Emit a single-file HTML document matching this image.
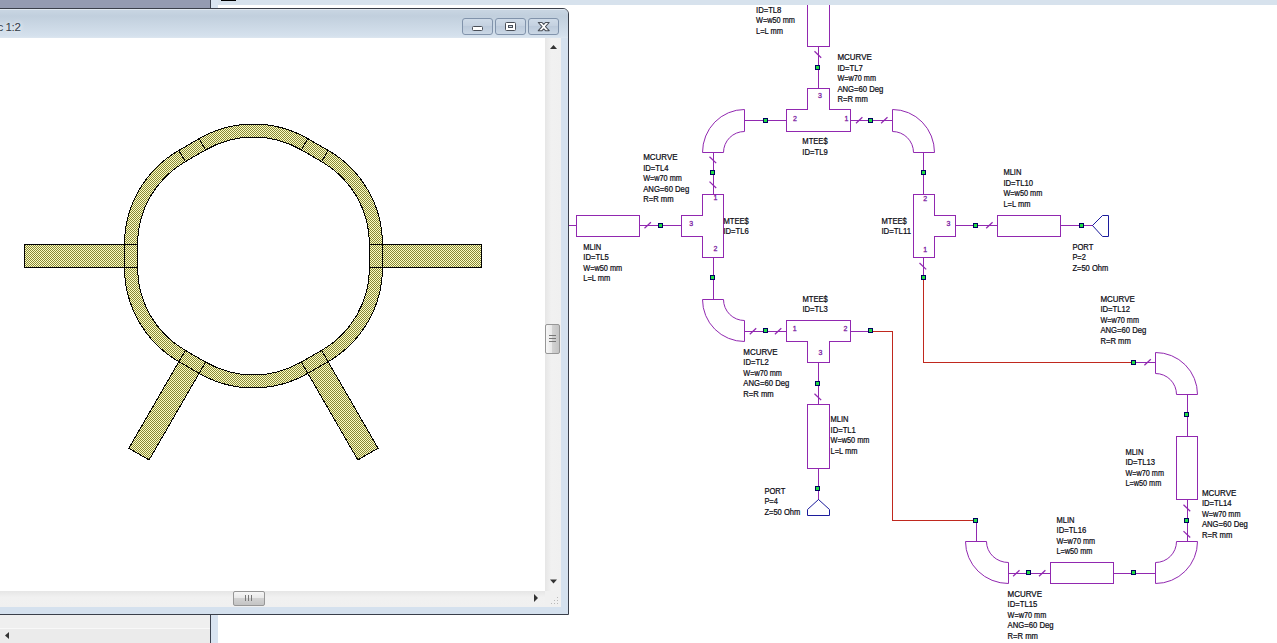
<!DOCTYPE html>
<html><head><meta charset="utf-8"><title>Schematic</title>
<style>
html,body{margin:0;padding:0;}
body{width:1277px;height:643px;overflow:hidden;position:relative;background:#fff;font-family:"Liberation Sans",sans-serif;}
div{position:absolute;box-sizing:border-box;}
#topstrip{left:211px;top:0;width:1066px;height:5px;background:#d7e2ed;}
#leftstrip{left:211px;top:0;width:7px;height:643px;background:#d9e4f1;}
#vline{left:210px;top:0;width:1px;height:643px;background:#3c4250;}
#mark{left:221px;top:0;width:15px;height:1px;background:#000;}
#topleft{left:0;top:0;width:210px;height:9px;background:#949bb1;}
#botleft{left:0;top:614px;width:210px;height:29px;background:#efefef;}
#botleft2{left:0;top:628px;width:210px;height:15px;background:#ebebeb;border-top:1px solid #f8f8f8;}
#win{left:-10px;top:8px;width:579px;height:607px;background:#d5e1ee;border:1px solid #3a3f4a;border-radius:6px 6px 0 0;}
#title{left:0;top:0;width:577px;height:29px;background:linear-gradient(#eef3f8 0px,#c8d5e2 1.5px,#c1cfdd 7px,#d5e1ed 27px,#dde6f0 29px);border-radius:5px 5px 0 0;}
#ttext{left:6.5px;top:11px;font-size:11.6px;line-height:14px;color:#333b46;white-space:nowrap;letter-spacing:-0.45px;text-shadow:0 0 4px rgba(255,255,255,.9),0 0 7px rgba(255,255,255,.6);}
#content{left:9px;top:29px;width:545px;height:553px;background:#fff;}
#vsb{left:554px;top:29px;width:16px;height:553px;background:linear-gradient(90deg,#e6e6e6,#f1f1f1 40%,#f0f0f0);}
#hsb{left:9px;top:582px;width:545px;height:16px;background:linear-gradient(#e6e6e6,#f1f1f1 40%,#f0f0f0);}
#corner{left:554px;top:582px;width:16px;height:16px;background:#f0f0f0;}
.btn{top:9px;width:31px;height:17px;border:1px solid #8193ab;border-radius:3px;background:linear-gradient(#cfdbe8,#c3d0df 50%,#bccadb 50%,#cad7e5);}
#vthumb{left:0px;top:285.5px;width:15px;height:30.5px;border:1px solid #979797;border-radius:2px;background:linear-gradient(90deg,#f6f6f6,#e9e9e9 45%,#d2d2d2 50%,#c4c4c4);}
#hthumb{left:233px;top:0px;width:31.5px;height:14.5px;border:1px solid #979797;border-radius:2px;background:linear-gradient(#f6f6f6,#e9e9e9 45%,#d2d2d2 50%,#c4c4c4);}
svg{position:absolute;left:0;top:0;}
.lb{font-size:8.3px;fill:#0a0a12;stroke:#0a0a12;stroke-width:0.22px;font-family:"Liberation Sans",sans-serif;}
.pn{font-size:7px;fill:#7d1fa3;stroke:#7d1fa3;stroke-width:0.3px;font-family:"Liberation Sans",sans-serif;text-anchor:middle;}
</style></head><body>
<div id="topstrip"></div><div id="leftstrip"></div><div id="vline"></div>
<div id="topleft"></div><div id="botleft"></div><div id="botleft2"></div>
<svg id="schem" width="1277" height="643" viewBox="0 0 1277 643">
<g stroke-width="1">
<path d="M807.5 0 L807.5 46.5 L829.5 46.5 L829.5 0" fill="none" stroke="#9128b0" shape-rendering="crispEdges"/>
<line x1="818.5" y1="46.5" x2="818.5" y2="88.5" stroke="#9128b0" shape-rendering="crispEdges"/>
<line x1="814.5" y1="51.3" x2="821.2" y2="57.7" stroke="#9128b0" stroke-width="1.25"/>
<path d="M807.5 88.5 L829.5 88.5 L829.5 109.5 L850.5 109.5 L850.5 131.5 L786.5 131.5 L786.5 109.5 L807.5 109.5 Z" fill="none" stroke="#9128b0" shape-rendering="crispEdges"/>
<line x1="744.5" y1="120.5" x2="786.5" y2="120.5" stroke="#9128b0" shape-rendering="crispEdges"/>
<line x1="850.5" y1="120.5" x2="892.5" y2="120.5" stroke="#9128b0" shape-rendering="crispEdges"/>
<line x1="856.0" y1="123.2" x2="862.4000000000001" y2="117.3" stroke="#9128b0" stroke-width="1.25"/>
<line x1="881.0999999999999" y1="123.2" x2="887.5" y2="117.3" stroke="#9128b0" stroke-width="1.25"/>
<path d="M702.5 152.5 A42.0 43.0 0 0 1 744.5 109.5 L744.5 131.5 A21.0 21.0 0 0 0 723.5 152.5 Z" fill="none" stroke="#9128b0"/>
<path d="M934.5 152.5 A42.0 43.0 0 0 0 892.5 109.5 L892.5 131.5 A21.0 21.0 0 0 1 913.5 152.5 Z" fill="none" stroke="#9128b0"/>
<line x1="713.5" y1="152.5" x2="713.5" y2="194.5" stroke="#9128b0" shape-rendering="crispEdges"/>
<line x1="709.5" y1="156.70000000000002" x2="716.2" y2="163.1" stroke="#9128b0" stroke-width="1.25"/>
<line x1="709.5" y1="181.60000000000002" x2="716.2" y2="188.0" stroke="#9128b0" stroke-width="1.25"/>
<line x1="923.5" y1="152.5" x2="923.5" y2="194.5" stroke="#9128b0" shape-rendering="crispEdges"/>
<path d="M702.5 194.5 L723.5 194.5 L723.5 257.5 L702.5 257.5 L702.5 236.5 L681.5 236.5 L681.5 215.5 L702.5 215.5 Z" fill="none" stroke="#9128b0" shape-rendering="crispEdges"/>
<rect x="576.5" y="215.5" width="63.0" height="21.0" fill="none" stroke="#9128b0" shape-rendering="crispEdges"/>
<line x1="569" y1="225.5" x2="576.5" y2="225.5" stroke="#9128b0" shape-rendering="crispEdges"/>
<line x1="639.5" y1="225.5" x2="681.5" y2="225.5" stroke="#9128b0" shape-rendering="crispEdges"/>
<line x1="644.5" y1="228.2" x2="650.9000000000001" y2="222.3" stroke="#9128b0" stroke-width="1.25"/>
<path d="M913.5 194.5 L934.5 194.5 L934.5 215.5 L955.5 215.5 L955.5 236.5 L934.5 236.5 L934.5 257.5 L913.5 257.5 Z" fill="none" stroke="#9128b0" shape-rendering="crispEdges"/>
<line x1="955.5" y1="225.5" x2="997.5" y2="225.5" stroke="#9128b0" shape-rendering="crispEdges"/>
<line x1="986.1999999999999" y1="228.2" x2="992.6" y2="222.3" stroke="#9128b0" stroke-width="1.25"/>
<rect x="997.5" y="215.5" width="63.0" height="21.0" fill="none" stroke="#9128b0" shape-rendering="crispEdges"/>
<line x1="1060.5" y1="225.5" x2="1092.5" y2="225.5" stroke="#9128b0" shape-rendering="crispEdges"/>
<path d="M1092.5 225.5 L1102.5 215.5 L1108.5 215.5 L1108.5 236.5 L1102.5 236.5 Z" fill="none" stroke="#1c1c9c"/>
<line x1="713.5" y1="257.5" x2="713.5" y2="299.5" stroke="#9128b0" shape-rendering="crispEdges"/>
<line x1="923.5" y1="257.5" x2="923.5" y2="278.5" stroke="#9128b0" shape-rendering="crispEdges"/>
<line x1="919.5" y1="263.0" x2="926.2" y2="269.4" stroke="#9128b0" stroke-width="1.25"/>
<path d="M923.5 278.5 L923.5 362.5 L1134.5 362.5" fill="none" stroke="#c0281e" shape-rendering="crispEdges"/>
<line x1="1134.5" y1="362.5" x2="1155.5" y2="362.5" stroke="#9128b0" shape-rendering="crispEdges"/>
<line x1="1144.3999999999999" y1="365.2" x2="1150.8" y2="359.3" stroke="#9128b0" stroke-width="1.25"/>
<path d="M702.5 299.5 A42.0 42.0 0 0 0 744.5 341.5 L744.5 320.5 A21.0 21.0 0 0 1 723.5 299.5 Z" fill="none" stroke="#9128b0"/>
<line x1="744.5" y1="331.5" x2="786.5" y2="331.5" stroke="#9128b0" shape-rendering="crispEdges"/>
<line x1="749.8" y1="334.2" x2="756.2" y2="328.3" stroke="#9128b0" stroke-width="1.25"/>
<line x1="774.9" y1="334.2" x2="781.3000000000001" y2="328.3" stroke="#9128b0" stroke-width="1.25"/>
<path d="M786.5 320.5 L850.5 320.5 L850.5 341.5 L829.5 341.5 L829.5 362.5 L807.5 362.5 L807.5 341.5 L786.5 341.5 Z" fill="none" stroke="#9128b0" shape-rendering="crispEdges"/>
<line x1="850.5" y1="331.5" x2="871.5" y2="331.5" stroke="#9128b0" shape-rendering="crispEdges"/>
<path d="M871.5 331.5 L892.5 331.5 L892.5 520.5 L976.5 520.5" fill="none" stroke="#c0281e" shape-rendering="crispEdges"/>
<line x1="976.5" y1="520.5" x2="976.5" y2="541.5" stroke="#9128b0" shape-rendering="crispEdges"/>
<line x1="818.5" y1="362.5" x2="818.5" y2="404.5" stroke="#9128b0" shape-rendering="crispEdges"/>
<line x1="814.5" y1="393.7" x2="821.2" y2="400.09999999999997" stroke="#9128b0" stroke-width="1.25"/>
<rect x="807.5" y="404.5" width="22.0" height="64.0" fill="none" stroke="#9128b0" shape-rendering="crispEdges"/>
<line x1="818.5" y1="468.5" x2="818.5" y2="499.5" stroke="#9128b0" shape-rendering="crispEdges"/>
<path d="M818.5 499.5 L829.5 509.5 L829.5 515.5 L807.5 515.5 L807.5 509.5 Z" fill="none" stroke="#1c1c9c"/>
<path d="M1197.5 394.5 A42.0 42.0 0 0 0 1155.5 352.5 L1155.5 373.5 A21.0 21.0 0 0 1 1176.5 394.5 Z" fill="none" stroke="#9128b0"/>
<line x1="1187.5" y1="394.5" x2="1187.5" y2="436.5" stroke="#9128b0" shape-rendering="crispEdges"/>
<rect x="1176.5" y="436.5" width="21.0" height="63.0" fill="none" stroke="#9128b0" shape-rendering="crispEdges"/>
<line x1="1187.5" y1="499.5" x2="1187.5" y2="541.5" stroke="#9128b0" shape-rendering="crispEdges"/>
<line x1="1183.5" y1="504.8" x2="1190.2" y2="511.2" stroke="#9128b0" stroke-width="1.25"/>
<line x1="1183.5" y1="531.0999999999999" x2="1190.2" y2="537.5" stroke="#9128b0" stroke-width="1.25"/>
<path d="M1197.5 541.5 A42.0 42.0 0 0 1 1155.5 583.5 L1155.5 562.5 A21.0 21.0 0 0 0 1176.5 541.5 Z" fill="none" stroke="#9128b0"/>
<line x1="1113.5" y1="573.5" x2="1155.5" y2="573.5" stroke="#9128b0" shape-rendering="crispEdges"/>
<rect x="1050.5" y="562.5" width="63.0" height="21.0" fill="none" stroke="#9128b0" shape-rendering="crispEdges"/>
<line x1="1008.5" y1="573.5" x2="1050.5" y2="573.5" stroke="#9128b0" shape-rendering="crispEdges"/>
<line x1="1013.0999999999999" y1="576.2" x2="1019.5" y2="570.3" stroke="#9128b0" stroke-width="1.25"/>
<line x1="1039.0" y1="576.2" x2="1045.4" y2="570.3" stroke="#9128b0" stroke-width="1.25"/>
<path d="M965.5 541.5 A43.0 42.0 0 0 0 1008.5 583.5 L1008.5 562.5 A22.0 21.0 0 0 1 986.5 541.5 Z" fill="none" stroke="#9128b0"/>
<rect x="815.0" y="65.0" width="5" height="5" fill="#000060" shape-rendering="crispEdges"/><rect x="816.0" y="66.0" width="3" height="3" fill="#22dd44" shape-rendering="crispEdges"/>
<rect x="763.0" y="118.0" width="5" height="5" fill="#000060" shape-rendering="crispEdges"/><rect x="764.0" y="119.0" width="3" height="3" fill="#22dd44" shape-rendering="crispEdges"/>
<rect x="868.0" y="118.0" width="5" height="5" fill="#000060" shape-rendering="crispEdges"/><rect x="869.0" y="119.0" width="3" height="3" fill="#22dd44" shape-rendering="crispEdges"/>
<rect x="710.0" y="170.0" width="5" height="5" fill="#000060" shape-rendering="crispEdges"/><rect x="711.0" y="171.0" width="3" height="3" fill="#22dd44" shape-rendering="crispEdges"/>
<rect x="921.0" y="170.0" width="5" height="5" fill="#000060" shape-rendering="crispEdges"/><rect x="922.0" y="171.0" width="3" height="3" fill="#22dd44" shape-rendering="crispEdges"/>
<rect x="658.0" y="223.0" width="5" height="5" fill="#000060" shape-rendering="crispEdges"/><rect x="659.0" y="224.0" width="3" height="3" fill="#22dd44" shape-rendering="crispEdges"/>
<rect x="973.0" y="223.0" width="5" height="5" fill="#000060" shape-rendering="crispEdges"/><rect x="974.0" y="224.0" width="3" height="3" fill="#22dd44" shape-rendering="crispEdges"/>
<rect x="1079.0" y="223.0" width="5" height="5" fill="#000060" shape-rendering="crispEdges"/><rect x="1080.0" y="224.0" width="3" height="3" fill="#22dd44" shape-rendering="crispEdges"/>
<rect x="710.0" y="275.0" width="5" height="5" fill="#000060" shape-rendering="crispEdges"/><rect x="711.0" y="276.0" width="3" height="3" fill="#22dd44" shape-rendering="crispEdges"/>
<rect x="921.0" y="275.0" width="5" height="5" fill="#000060" shape-rendering="crispEdges"/><rect x="922.0" y="276.0" width="3" height="3" fill="#22dd44" shape-rendering="crispEdges"/>
<rect x="1131.0" y="360.0" width="5" height="5" fill="#000060" shape-rendering="crispEdges"/><rect x="1132.0" y="361.0" width="3" height="3" fill="#22dd44" shape-rendering="crispEdges"/>
<rect x="763.0" y="328.0" width="5" height="5" fill="#000060" shape-rendering="crispEdges"/><rect x="764.0" y="329.0" width="3" height="3" fill="#22dd44" shape-rendering="crispEdges"/>
<rect x="868.0" y="328.0" width="5" height="5" fill="#000060" shape-rendering="crispEdges"/><rect x="869.0" y="329.0" width="3" height="3" fill="#22dd44" shape-rendering="crispEdges"/>
<rect x="973.0" y="518.0" width="5" height="5" fill="#000060" shape-rendering="crispEdges"/><rect x="974.0" y="519.0" width="3" height="3" fill="#22dd44" shape-rendering="crispEdges"/>
<rect x="815.0" y="381.0" width="5" height="5" fill="#000060" shape-rendering="crispEdges"/><rect x="816.0" y="382.0" width="3" height="3" fill="#22dd44" shape-rendering="crispEdges"/>
<rect x="815.0" y="486.0" width="5" height="5" fill="#000060" shape-rendering="crispEdges"/><rect x="816.0" y="487.0" width="3" height="3" fill="#22dd44" shape-rendering="crispEdges"/>
<rect x="1184.0" y="412.0" width="5" height="5" fill="#000060" shape-rendering="crispEdges"/><rect x="1185.0" y="413.0" width="3" height="3" fill="#22dd44" shape-rendering="crispEdges"/>
<rect x="1184.0" y="518.0" width="5" height="5" fill="#000060" shape-rendering="crispEdges"/><rect x="1185.0" y="519.0" width="3" height="3" fill="#22dd44" shape-rendering="crispEdges"/>
<rect x="1131.0" y="570.0" width="5" height="5" fill="#000060" shape-rendering="crispEdges"/><rect x="1132.0" y="571.0" width="3" height="3" fill="#22dd44" shape-rendering="crispEdges"/>
<rect x="1026.0" y="570.0" width="5" height="5" fill="#000060" shape-rendering="crispEdges"/><rect x="1027.0" y="571.0" width="3" height="3" fill="#22dd44" shape-rendering="crispEdges"/>
<text x="819.9" y="97.7" class="pn">3</text>
<text x="795" y="120.8" class="pn">2</text>
<text x="846.4" y="120.8" class="pn">1</text>
<text x="715.4" y="200.2" class="pn">1</text>
<text x="691.3" y="226" class="pn">3</text>
<text x="715.4" y="251.3" class="pn">2</text>
<text x="925.2" y="201.4" class="pn">2</text>
<text x="948.5" y="226" class="pn">3</text>
<text x="925.2" y="252" class="pn">1</text>
<text x="794.6" y="331.4" class="pn">1</text>
<text x="845.5" y="331.4" class="pn">2</text>
<text x="820.5" y="355.2" class="pn">3</text>
<text x="756" y="12.6" class="lb" textLength="25.4" lengthAdjust="spacingAndGlyphs">ID=TL8</text>
<text x="756" y="23.1" class="lb" textLength="38.9" lengthAdjust="spacingAndGlyphs">W=w50 mm</text>
<text x="756" y="33.7" class="lb" textLength="27.0" lengthAdjust="spacingAndGlyphs">L=L mm</text>
<text x="837.4" y="60.1" class="lb" textLength="34.4" lengthAdjust="spacingAndGlyphs">MCURVE</text>
<text x="837.4" y="70.6" class="lb" textLength="25.4" lengthAdjust="spacingAndGlyphs">ID=TL7</text>
<text x="837.4" y="81.2" class="lb" textLength="38.6" lengthAdjust="spacingAndGlyphs">W=w70 mm</text>
<text x="837.4" y="91.7" class="lb" textLength="46.0" lengthAdjust="spacingAndGlyphs">ANG=60 Deg</text>
<text x="837.4" y="102.2" class="lb" textLength="30.4" lengthAdjust="spacingAndGlyphs">R=R mm</text>
<text x="802.3" y="144.3" class="lb" textLength="25.4" lengthAdjust="spacingAndGlyphs">MTEE$</text>
<text x="802.3" y="154.8" class="lb" textLength="25.4" lengthAdjust="spacingAndGlyphs">ID=TL9</text>
<text x="643.2" y="160.3" class="lb" textLength="34.4" lengthAdjust="spacingAndGlyphs">MCURVE</text>
<text x="643.2" y="170.8" class="lb" textLength="25.4" lengthAdjust="spacingAndGlyphs">ID=TL4</text>
<text x="643.2" y="181.4" class="lb" textLength="38.6" lengthAdjust="spacingAndGlyphs">W=w70 mm</text>
<text x="643.2" y="191.9" class="lb" textLength="46.0" lengthAdjust="spacingAndGlyphs">ANG=60 Deg</text>
<text x="643.2" y="202.4" class="lb" textLength="30.4" lengthAdjust="spacingAndGlyphs">R=R mm</text>
<text x="723.4" y="223.5" class="lb" textLength="25.4" lengthAdjust="spacingAndGlyphs">MTEE$</text>
<text x="723.4" y="234.0" class="lb" textLength="25.4" lengthAdjust="spacingAndGlyphs">ID=TL6</text>
<text x="583.3" y="249.5" class="lb" textLength="18.0" lengthAdjust="spacingAndGlyphs">MLIN</text>
<text x="583.3" y="260.0" class="lb" textLength="25.4" lengthAdjust="spacingAndGlyphs">ID=TL5</text>
<text x="583.3" y="270.6" class="lb" textLength="38.9" lengthAdjust="spacingAndGlyphs">W=w50 mm</text>
<text x="583.3" y="281.1" class="lb" textLength="27.0" lengthAdjust="spacingAndGlyphs">L=L mm</text>
<text x="881.4" y="223.5" class="lb" textLength="25.4" lengthAdjust="spacingAndGlyphs">MTEE$</text>
<text x="881.4" y="234.0" class="lb" textLength="29.7" lengthAdjust="spacingAndGlyphs">ID=TL11</text>
<text x="1003.4" y="175.3" class="lb" textLength="18.0" lengthAdjust="spacingAndGlyphs">MLIN</text>
<text x="1003.4" y="185.8" class="lb" textLength="29.7" lengthAdjust="spacingAndGlyphs">ID=TL10</text>
<text x="1003.4" y="196.4" class="lb" textLength="38.9" lengthAdjust="spacingAndGlyphs">W=w50 mm</text>
<text x="1003.4" y="206.9" class="lb" textLength="27.0" lengthAdjust="spacingAndGlyphs">L=L mm</text>
<text x="1072.4" y="249.5" class="lb" textLength="20.9" lengthAdjust="spacingAndGlyphs">PORT</text>
<text x="1072.4" y="260.0" class="lb" textLength="13.5" lengthAdjust="spacingAndGlyphs">P=2</text>
<text x="1072.4" y="270.6" class="lb" textLength="35.9" lengthAdjust="spacingAndGlyphs">Z=50 Ohm</text>
<text x="802.4" y="301.6" class="lb" textLength="25.4" lengthAdjust="spacingAndGlyphs">MTEE$</text>
<text x="802.4" y="312.1" class="lb" textLength="25.4" lengthAdjust="spacingAndGlyphs">ID=TL3</text>
<text x="743.3" y="354.5" class="lb" textLength="34.4" lengthAdjust="spacingAndGlyphs">MCURVE</text>
<text x="743.3" y="365.0" class="lb" textLength="25.4" lengthAdjust="spacingAndGlyphs">ID=TL2</text>
<text x="743.3" y="375.6" class="lb" textLength="38.6" lengthAdjust="spacingAndGlyphs">W=w70 mm</text>
<text x="743.3" y="386.1" class="lb" textLength="46.0" lengthAdjust="spacingAndGlyphs">ANG=60 Deg</text>
<text x="743.3" y="396.6" class="lb" textLength="30.4" lengthAdjust="spacingAndGlyphs">R=R mm</text>
<text x="830.5" y="422.1" class="lb" textLength="18.0" lengthAdjust="spacingAndGlyphs">MLIN</text>
<text x="830.5" y="432.6" class="lb" textLength="25.4" lengthAdjust="spacingAndGlyphs">ID=TL1</text>
<text x="830.5" y="443.2" class="lb" textLength="38.9" lengthAdjust="spacingAndGlyphs">W=w50 mm</text>
<text x="830.5" y="453.7" class="lb" textLength="27.0" lengthAdjust="spacingAndGlyphs">L=L mm</text>
<text x="764.4" y="493.9" class="lb" textLength="20.9" lengthAdjust="spacingAndGlyphs">PORT</text>
<text x="764.4" y="504.4" class="lb" textLength="13.5" lengthAdjust="spacingAndGlyphs">P=4</text>
<text x="764.4" y="515.0" class="lb" textLength="35.9" lengthAdjust="spacingAndGlyphs">Z=50 Ohm</text>
<text x="1100.4" y="301.6" class="lb" textLength="34.4" lengthAdjust="spacingAndGlyphs">MCURVE</text>
<text x="1100.4" y="312.1" class="lb" textLength="29.7" lengthAdjust="spacingAndGlyphs">ID=TL12</text>
<text x="1100.4" y="322.7" class="lb" textLength="38.6" lengthAdjust="spacingAndGlyphs">W=w70 mm</text>
<text x="1100.4" y="333.2" class="lb" textLength="46.0" lengthAdjust="spacingAndGlyphs">ANG=60 Deg</text>
<text x="1100.4" y="343.7" class="lb" textLength="30.4" lengthAdjust="spacingAndGlyphs">R=R mm</text>
<text x="1125.4" y="454.6" class="lb" textLength="18.0" lengthAdjust="spacingAndGlyphs">MLIN</text>
<text x="1125.4" y="465.1" class="lb" textLength="29.7" lengthAdjust="spacingAndGlyphs">ID=TL13</text>
<text x="1125.4" y="475.7" class="lb" textLength="38.6" lengthAdjust="spacingAndGlyphs">W=w70 mm</text>
<text x="1125.4" y="486.2" class="lb" textLength="35.8" lengthAdjust="spacingAndGlyphs">L=w50 mm</text>
<text x="1201.9" y="495.5" class="lb" textLength="34.4" lengthAdjust="spacingAndGlyphs">MCURVE</text>
<text x="1201.9" y="506.0" class="lb" textLength="29.7" lengthAdjust="spacingAndGlyphs">ID=TL14</text>
<text x="1201.9" y="516.6" class="lb" textLength="38.6" lengthAdjust="spacingAndGlyphs">W=w70 mm</text>
<text x="1201.9" y="527.1" class="lb" textLength="46.0" lengthAdjust="spacingAndGlyphs">ANG=60 Deg</text>
<text x="1201.9" y="537.6" class="lb" textLength="30.4" lengthAdjust="spacingAndGlyphs">R=R mm</text>
<text x="1056.5" y="522.6" class="lb" textLength="18.0" lengthAdjust="spacingAndGlyphs">MLIN</text>
<text x="1056.5" y="533.1" class="lb" textLength="29.7" lengthAdjust="spacingAndGlyphs">ID=TL16</text>
<text x="1056.5" y="543.7" class="lb" textLength="38.6" lengthAdjust="spacingAndGlyphs">W=w70 mm</text>
<text x="1056.5" y="554.2" class="lb" textLength="35.8" lengthAdjust="spacingAndGlyphs">L=w50 mm</text>
<text x="1007.6" y="596.6" class="lb" textLength="34.4" lengthAdjust="spacingAndGlyphs">MCURVE</text>
<text x="1007.6" y="607.1" class="lb" textLength="29.7" lengthAdjust="spacingAndGlyphs">ID=TL15</text>
<text x="1007.6" y="617.7" class="lb" textLength="38.6" lengthAdjust="spacingAndGlyphs">W=w70 mm</text>
<text x="1007.6" y="628.2" class="lb" textLength="46.0" lengthAdjust="spacingAndGlyphs">ANG=60 Deg</text>
<text x="1007.6" y="638.7" class="lb" textLength="30.4" lengthAdjust="spacingAndGlyphs">R=R mm</text>
</g>
</svg>
<div id="topstrip2" style="left:218px;top:0;width:1059px;height:5px;background:#d7e2ed;"></div>
<div id="mark"></div>
<svg width="210" height="29" viewBox="0 0 210 29" style="left:0;top:614px"><path d="M9 18 L9 25 L5 21.5 Z" fill="#333"/></svg>
<div id="win">
 <div id="title"></div>
 <div id="ttext">c 1:2</div>
 <div class="btn" style="left:471px"></div>
 <div class="btn" style="left:504px"></div>
 <div class="btn" style="left:537px"></div>
 <div id="content"></div>
 <div id="vsb"><div id="vthumb"></div></div>
 <div id="hsb"><div id="hthumb"></div></div>
 <div id="corner"></div>
</div>
<svg id="lay" width="570" height="643" viewBox="0 0 570 643">
<defs><pattern id="chk" width="2" height="2" patternUnits="userSpaceOnUse"><rect width="2" height="2" fill="#ffffc4"/><rect width="1" height="1" fill="#86863a"/><rect x="1" y="1" width="1" height="1" fill="#86863a"/></pattern></defs>
<g fill="url(#chk)" stroke="#000" stroke-width="1" shape-rendering="crispEdges">
<path d="M24.5 244.5 H124.5 V267.5 H24.5 Z" shape-rendering="crispEdges"/>
<path d="M124.5 244.5 H137.5 V267.5 H124.5 Z" shape-rendering="crispEdges"/>
<path d="M369.5 244.5 H382.5 V267.5 H369.5 Z" shape-rendering="crispEdges"/>
<path d="M382.5 244.5 H481.5 V267.5 H382.5 Z" shape-rendering="crispEdges"/>
<path d="M124.50 244.50 A108.7 108.7 0 0 1 178.85 150.36 L185.35 161.62 A95.7 95.7 0 0 0 137.50 244.50 Z"/>
<path d="M185.35 161.62 L205.61 149.92 L199.11 138.66 L178.85 150.36 Z"/>
<path d="M199.11 138.66 A108.7 108.7 0 0 1 307.81 138.66 L301.31 149.92 A95.7 95.7 0 0 0 205.61 149.92 Z"/>
<path d="M301.31 149.92 L321.58 161.62 L328.08 150.36 L307.81 138.66 Z"/>
<path d="M328.15 150.36 A108.7 108.7 0 0 1 382.50 244.50 L369.50 244.50 A95.7 95.7 0 0 0 321.65 161.62 Z"/>
<path d="M124.50 267.50 A108.7 108.7 0 0 0 178.85 361.64 L185.35 350.38 A95.7 95.7 0 0 1 137.50 267.50 Z"/>
<path d="M178.85 361.64 L199.11 373.34 L205.61 362.08 L185.35 350.38 Z"/>
<path d="M199.11 373.34 A108.7 108.7 0 0 0 307.81 373.34 L301.31 362.08 A95.7 95.7 0 0 1 205.61 362.08 Z"/>
<path d="M307.81 373.34 L328.08 361.64 L321.58 350.38 L301.31 362.08 Z"/>
<path d="M328.15 361.64 A108.7 108.7 0 0 0 382.50 267.50 L369.50 267.50 A95.7 95.7 0 0 1 321.65 350.38 Z"/>
<path d="M178.85 361.64 L128.85 448.24 L149.11 459.94 L199.11 373.34 Z"/>
<path d="M307.81 373.34 L357.81 459.94 L378.08 448.24 L328.08 361.64 Z"/>
</g>
<!-- window button icons -->
<g>
<rect x="472.5" y="26.5" width="10" height="4" rx="1" fill="#fff" stroke="#4a4f58"/>
<rect x="505.5" y="22.5" width="10" height="8" rx="1" fill="#fff" stroke="#4a4f58"/>
<rect x="508.5" y="25.5" width="4" height="2" fill="#d0dae6" stroke="#4a4f58"/>
</g>
<path d="M538.3 22.5 h3.7 l1.75 1.9 l1.75 -1.9 h3.7 l-3.7 4.1 l3.7 4.1 h-3.7 l-1.75 -1.9 l-1.75 1.9 h-3.7 l3.7 -4.1 Z" fill="#fff" stroke="#4a4f58" stroke-width="1.1" stroke-linejoin="round"/>
<!-- scroll arrows -->
<path d="M550 49 L553.5 45 L557 49 Z" fill="#333"/>
<path d="M550 579.5 L557 579.5 L553.5 583.5 Z" fill="#333"/>
<path d="M534 594 L534 602 L538 598 Z" fill="#333"/>
<g fill="#777" shape-rendering="crispEdges">
<rect x="549" y="335" width="7" height="1"/><rect x="549" y="338" width="7" height="1"/><rect x="549" y="341" width="7" height="1"/>
<rect x="245" y="595" width="1" height="6"/><rect x="248" y="595" width="1" height="6"/><rect x="251" y="595" width="1" height="6"/>
</g>
<g fill="#b8b8b8"><rect x="557" y="597" width="1" height="1"/><rect x="557" y="600" width="1" height="1"/><rect x="557" y="603" width="1" height="1"/><rect x="554" y="600" width="1" height="1"/><rect x="554" y="603" width="1" height="1"/><rect x="551" y="603" width="1" height="1"/></g>
</svg>
</body></html>
